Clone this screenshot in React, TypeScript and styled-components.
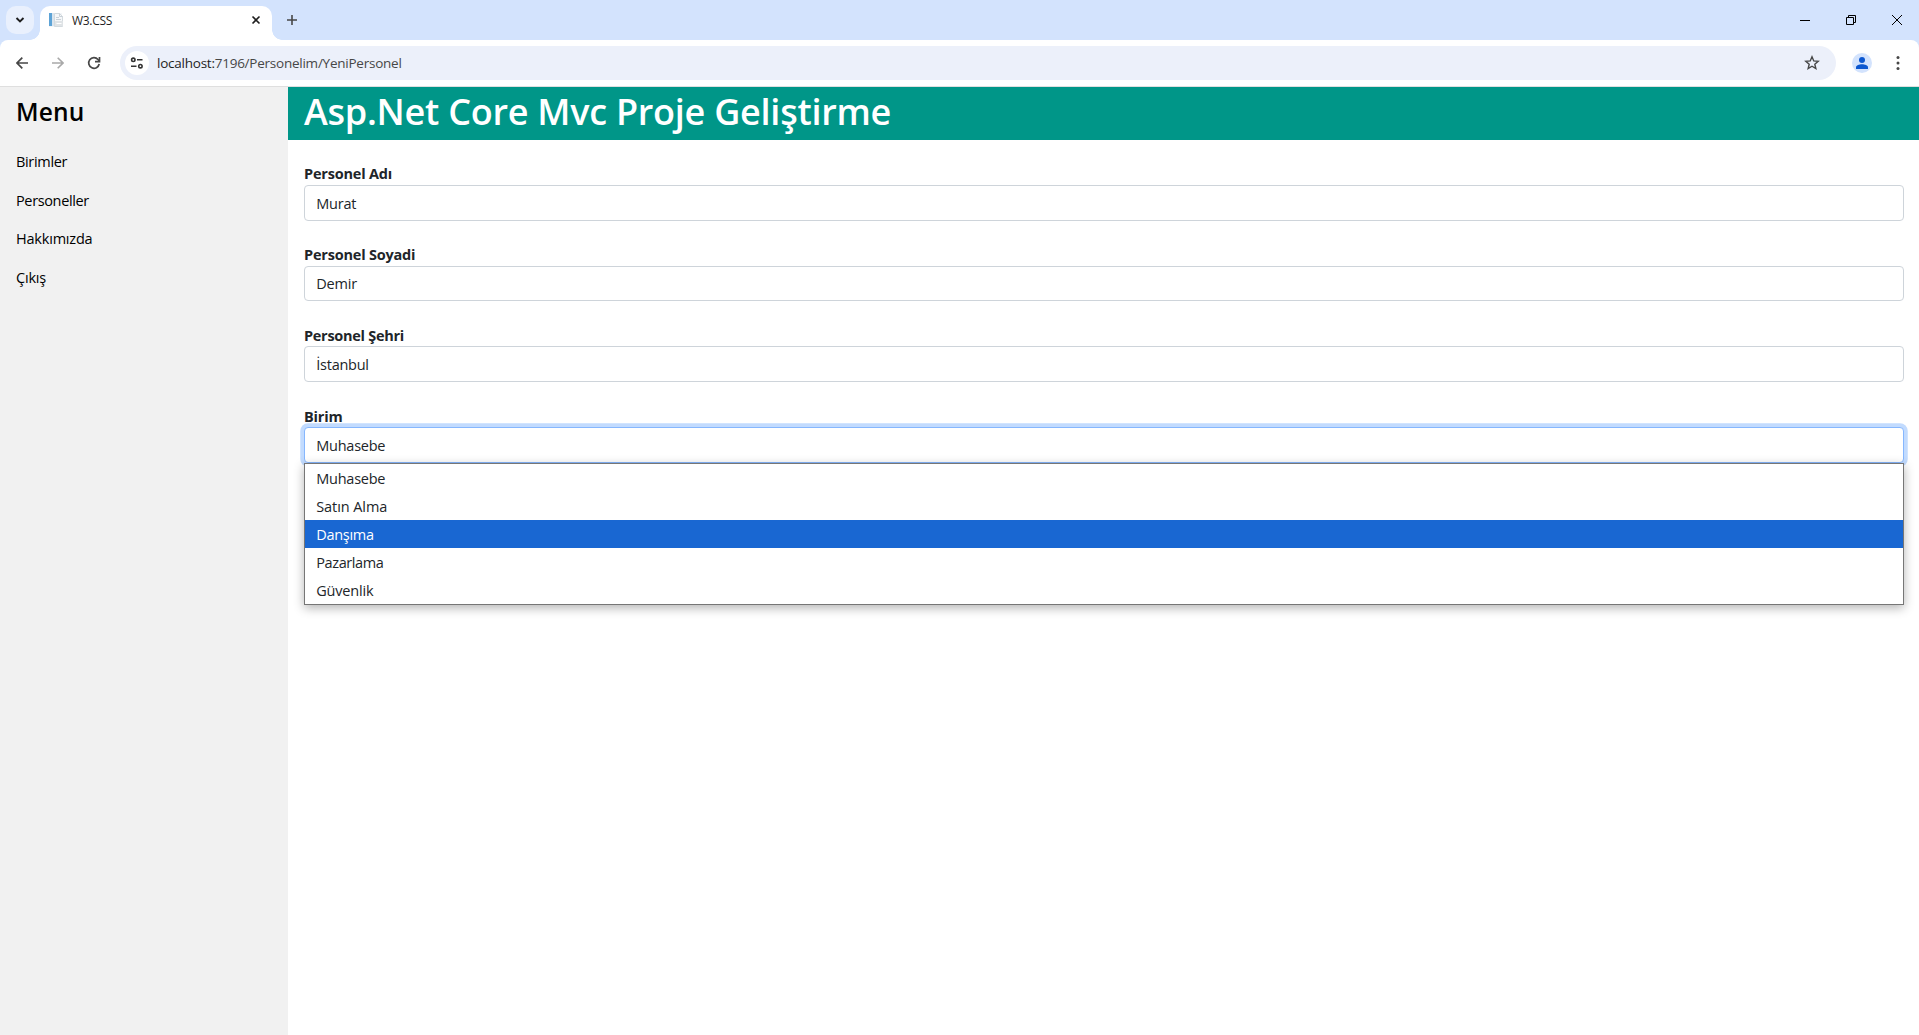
import React from 'react';
import styled, { createGlobalStyle } from 'styled-components';

const GlobalStyle = createGlobalStyle`
  *, *::before, *::after { box-sizing: border-box; }
  html, body { margin: 0; padding: 0; }
  body {
    height: 100vh;
    overflow: hidden;
    background: #fff;
    color: #212529;
    font-family: "Segoe UI", "Open Sans", "Noto Sans", sans-serif;
    font-size: 14.5px;
    line-height: 22.5px;
  }
`;

const Window = styled.div`
  display: flex;
  flex-direction: column;
  height: 100vh;
  background: #d3e3fd;
`;

const TabStrip = styled.header`
  display: flex;
  align-items: flex-start;
  flex: none;
  height: 40px;
  padding: 6px 0 0 6px;
`;

const TabSearch = styled.div`
  display: grid;
  place-items: center;
  width: 28px;
  height: 28px;
  margin-right: 6px;
  border-radius: 10px;
  background: #e9f0fd;
`;

const Tab = styled.div`
  position: relative;
  display: flex;
  align-items: center;
  width: 232px;
  height: 34px;
  padding: 0 9px 6px 8px;
  border-radius: 10px 10px 0 0;
  background: #fff;

  &::before, &::after {
    content: "";
    position: absolute;
    bottom: 0;
    width: 10px;
    height: 10px;
  }
  &::before {
    left: -10px;
    background: radial-gradient(circle at 0 0, transparent 9.5px, #fff 10px);
  }
  &::after {
    right: -10px;
    background: radial-gradient(circle at 100% 0, transparent 9.5px, #fff 10px);
  }
`;

const TabTitle = styled.span`
  flex: 1;
  margin-left: 8px;
  font-size: 12px;
  line-height: 17px;
  letter-spacing: -0.3px;
  color: #1f1f1f;
`;

const NewTab = styled.div`
  display: grid;
  place-items: center;
  width: 28px;
  height: 28px;
  margin-left: 6px;
`;

const WindowControls = styled.div`
  display: flex;
  margin-left: auto;
  margin-right: -1px;
  height: 28px;
`;

const WindowButton = styled.div`
  display: grid;
  place-items: center;
  width: 46px;
`;

const Toolbar = styled.div`
  display: flex;
  align-items: center;
  flex: none;
  height: 47px;
  padding: 0 8px 1px 4px;
  border-bottom: 1px solid #dfdfdf;
  border-radius: 8px 8px 0 0;
  background: #fff;
`;

const ToolButton = styled.div<{ $width?: number }>`
  display: grid;
  place-items: center;
  width: ${(p) => p.$width ?? 36}px;
  height: 34px;
`;

const AddressBar = styled.div`
  display: flex;
  align-items: center;
  width: 1716px;
  height: 34px;
  margin-left: 8px;
  padding: 0 16px 0 5px;
  border-radius: 17px;
  background: #ecf0fa;
`;

const SiteInfo = styled.div`
  display: grid;
  place-items: center;
  width: 24px;
  height: 24px;
  margin-right: 8px;
  border-radius: 50%;
  background: #fff;
`;

const Url = styled.span`
  flex: 1;
  font-size: 13.5px;
  line-height: 20px;
  letter-spacing: -0.24px;
  color: #474747;
`;

const Host = styled.span`
  color: #1f1f1f;
`;

const Avatar = styled.div`
  display: grid;
  place-items: center;
  width: 20px;
  height: 20px;
  margin: 0 18px 0 16px;
  border-radius: 50%;
  background: #d3e3fd;
`;

const Page = styled.div`
  display: flex;
  flex: 1;
  min-height: 0;
  background: #fff;
`;

const Sidebar = styled.nav`
  width: 288px;
  background: #f1f1f1;
  color: #000;
`;

const SidebarTitle = styled.h3`
  margin: 0 0 7px;
  padding-left: 16px;
  font-size: 24.5px;
  line-height: 49px;
  font-weight: 600;
  letter-spacing: 0.2px;
`;

const SidebarLink = styled.a<{ $track: number }>`
  display: block;
  padding: 8px 16px;
  letter-spacing: ${(p) => p.$track}px;
`;

const Main = styled.main`
  flex: 1;
`;

const Banner = styled.h1`
  margin: 0 0 22.3px;
  height: 53px;
  padding-left: 16px;
  background: #009688;
  color: #fff;
  font-size: 36px;
  line-height: 49px;
  font-weight: 600;
  letter-spacing: -0.25px;
`;

const Form = styled.form`
  display: flex;
  flex-direction: column;
  gap: 22.5px;
  padding: 0 15px 0 16px;
`;

const Field = styled.div`
  position: relative;
`;

const Label = styled.label<{ $track: number }>`
  display: block;
  height: 22.5px;
  padding-top: 1.05px;
  font-size: 14.5px;
  font-weight: 700;
  letter-spacing: ${(p) => p.$track}px;
`;

const Control = styled.div<{ $focused?: boolean; $track?: number }>`
  height: 35.75px;
  padding: 6.9px 11.25px 0;
  border: 1px solid ${(p) => (p.$focused ? '#86b7fe' : '#ced4da')};
  border-radius: 4px;
  background: #fff;
  letter-spacing: ${(p) => p.$track ?? 0}px;
  box-shadow: ${(p) => (p.$focused ? '0 0 0 3.75px #c2dbfe' : 'none')};
`;

const OptionList = styled.div`
  position: absolute;
  top: 58.25px;
  left: 0;
  right: 0;
  border: 1px solid #767676;
  background: #fff;
  box-shadow: 0 3px 10px rgba(0, 0, 0, 0.3);
`;

const Option = styled.div<{ $active?: boolean; $track: number }>`
  height: 28px;
  padding-left: 11.25px;
  line-height: 29px;
  letter-spacing: ${(p) => p.$track}px;
  background: ${(p) => (p.$active ? '#1967d2' : 'transparent')};
  color: ${(p) => (p.$active ? '#fff' : '#212529')};
`;

const links = [
  { text: 'Birimler', track: -0.33 },
  { text: 'Personeller', track: -0.36 },
  { text: 'Hakkımızda', track: -0.2 },
  { text: 'Çıkış', track: -0.2 },
];

const fields = [
  { label: 'Personel Adı', labelTrack: -0.2, value: 'Murat', track: -0.2 },
  { label: 'Personel Soyadi', labelTrack: -0.2, value: 'Demir', track: -0.2 },
  { label: 'Personel Şehri', labelTrack: -0.28, value: 'İstanbul', track: -0.25 },
];

const options = [
  { text: 'Muhasebe', track: -0.25 },
  { text: 'Satın Alma', track: -0.08 },
  { text: 'Danşıma', track: -0.3 },
  { text: 'Pazarlama', track: -0.4 },
  { text: 'Güvenlik', track: -0.2 },
];

const Favicon = () => (
  <svg width="16" height="16" viewBox="0 0 16 16">
    <path d="M1 1h13v14H1z" fill="#f3f6f9" />
    <path d="M1 1h3v13H1z" fill="#5da3d6" />
    <path d="M4 1h2v13H4z" fill="#dbe5ee" />
    <path d="M6.5 1.500h5l3 3v10h-8z" fill="#f5f7f9" stroke="#d3dade" />
    <path d="M11.500 1.500v3h3M8 5.500h3M8 7.500h5" stroke="#c9d1d8" fill="none" />
    <path d="M7 9h8v5H7z" fill="#dfe3e6" />
    <path d="M8.500 11.500h5" stroke="#fff" />
  </svg>
);

export default function App() {
  return (
    <Window>
      <GlobalStyle />
      <TabStrip>
        <TabSearch>
          <svg width="10" height="8" viewBox="0 0 10 8" fill="none" stroke="#1f1f1f" strokeWidth="1.9">
            <path d="M1.500 2l3.500 3.500L8.500 2" />
          </svg>
        </TabSearch>
        <Tab>
          <Favicon />
          <TabTitle>W3.CSS</TabTitle>
          <svg width="14" height="14" viewBox="0 0 14 14" stroke="#1f1f1f" strokeWidth="1.6">
            <path d="M3.500 3.500l7 7M10.500 3.500l-7 7" />
          </svg>
        </Tab>
        <NewTab>
          <svg width="12" height="12" viewBox="0 0 12 12" stroke="#474747" strokeWidth="1.6">
            <path d="M6 1v10M1 6h10" />
          </svg>
        </NewTab>
        <WindowControls>
          <WindowButton>
            <svg width="10" height="10" viewBox="0 0 10 10" stroke="#000"><path d="M0 5.500h10" /></svg>
          </WindowButton>
          <WindowButton>
            <svg width="10" height="10" viewBox="0 0 10 10" stroke="#000" fill="none">
              <path d="M.5 2.500h7v7h-7zM2.500 2.500v-2h7v7h-2" />
            </svg>
          </WindowButton>
          <WindowButton>
            <svg width="10" height="10" viewBox="0 0 10 10" stroke="#000"><path d="M0 0l10 10M10 0L0 10" /></svg>
          </WindowButton>
        </WindowControls>
      </TabStrip>

      <Toolbar>
        <ToolButton>
          <svg width="12" height="12" viewBox="0 0 12 12" stroke="#474747" strokeWidth="1.7" fill="none">
            <path d="M12 6H1.200M6.300.7L1 6l5.300 5.300" />
          </svg>
        </ToolButton>
        <ToolButton>
          <svg width="12" height="12" viewBox="0 0 12 12" stroke="#a9a9a9" strokeWidth="1.600" fill="none">
            <path d="M0 6h10.800M5.700.7L11 6l-5.300 5.300" />
          </svg>
        </ToolButton>
        <ToolButton>
          <svg width="14" height="14" viewBox="0 0 14 14" stroke="#474747" strokeWidth="1.700" fill="none">
            <path d="M12.200 8A5.300 5.300 0 1 1 11 3.500l1.500 1.800" />
            <path d="M12.500 1v4.600H8" />
          </svg>
        </ToolButton>
        <AddressBar>
          <SiteInfo>
            <svg width="14" height="12" viewBox="0 0 14 12" stroke="#333" strokeWidth="1.600" fill="none">
              <circle cx="3.300" cy="2.800" r="1.700" />
              <path d="M7 2.800h5.500M1 9.200h5.500" />
              <circle cx="10.400" cy="9.200" r="1.700" />
            </svg>
          </SiteInfo>
          <Url><Host>localhost:</Host>7196/Personelim/YeniPersonel</Url>
          <svg width="16" height="16" viewBox="0 0 16 16" stroke="#474747" strokeWidth="1.400" fill="none">
            <path d="M8 1.800l1.750 4.100 4.450.4-3.400 2.900 1.050 4.400L8 11.250 4.150 13.600 5.200 9.200 1.800 6.300l4.450-.4z" />
          </svg>
        </AddressBar>
        <Avatar>
          <svg width="12" height="12" viewBox="0 0 12 12" fill="#0b57d0">
            <circle cx="6" cy="3" r="3" />
            <path d="M0 12v-1.800C0 8.300 3.300 7.200 6 7.200s6 1.100 6 3V12z" />
          </svg>
        </Avatar>
        <ToolButton $width={16}>
          <svg width="4" height="14" viewBox="0 0 4 14" fill="#474747">
            <circle cx="2" cy="1.600" r="1.500" />
            <circle cx="2" cy="7" r="1.500" />
            <circle cx="2" cy="12.400" r="1.500" />
          </svg>
        </ToolButton>
      </Toolbar>

      <Page>
        <Sidebar>
          <SidebarTitle>Menu</SidebarTitle>
          {links.map((l) => (
            <SidebarLink key={l.text} $track={l.track}>{l.text}</SidebarLink>
          ))}
        </Sidebar>
        <Main>
          <Banner>Asp.Net Core Mvc Proje Geliştirme</Banner>
          <Form>
            {fields.map((f) => (
              <Field key={f.label}>
                <Label $track={f.labelTrack}>{f.label}</Label>
                <Control $track={f.track}>{f.value}</Control>
              </Field>
            ))}
            <Field>
              <Label $track={-0.2}>Birim</Label>
              <Control $focused $track={-0.25}>Muhasebe</Control>
              <OptionList>
                {options.map((o) => (
                  <Option key={o.text} $active={o.text === 'Danşıma'} $track={o.track}>{o.text}</Option>
                ))}
              </OptionList>
            </Field>
          </Form>
        </Main>
      </Page>
    </Window>
  );
}
